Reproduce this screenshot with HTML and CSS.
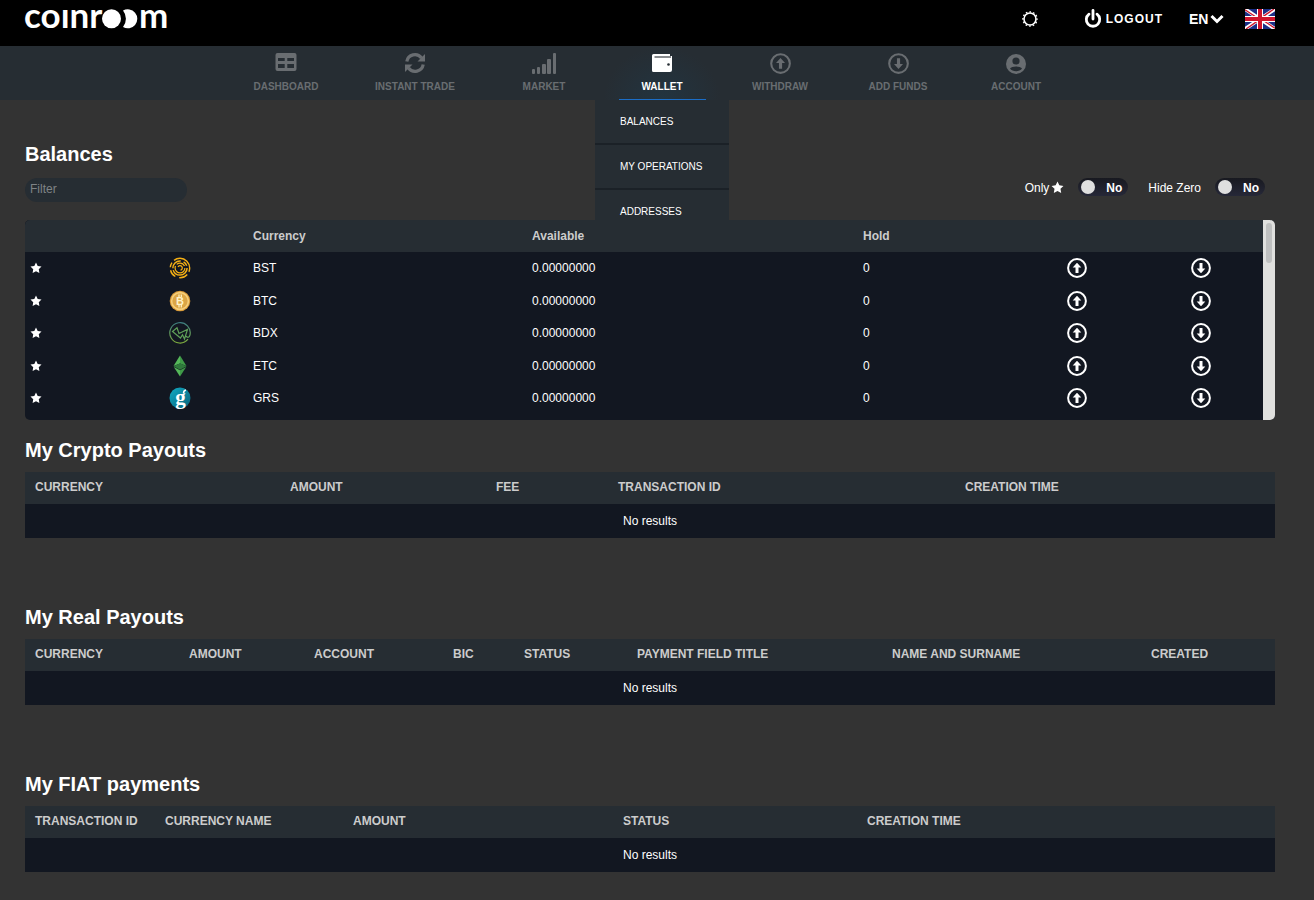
FILE: index.html
```html
<!DOCTYPE html>
<html lang="en">

<head>
  <meta charset="UTF-8">
  <meta name="viewport" content="width=device-width, initial-scale=1.0">
  <title>coinroom</title>
  <link rel="stylesheet" href="styles.css">
</head>

<body>
  <!-- shared icons -->
  <svg class="sprite" aria-hidden="true">
    <symbol id="star" viewBox="0 0 24 24">
      <path d="M12 1l3.4 7 7.6 1.1-5.500 5.400 1.300 7.600L12 18.500l-6.800 3.600 1.300-7.600L1 9.100 8.600 8z" fill="currentColor" />
    </symbol>
    <symbol id="up" viewBox="0 0 20 20">
      <circle cx="10" cy="10" r="8.900" fill="none" stroke="currentColor" stroke-width="2" />
      <path d="M10 4.700L14.300 9.500H11.500V15H8.500V9.500H5.700z" fill="currentColor" />
    </symbol>
    <symbol id="down" viewBox="0 0 20 20">
      <circle cx="10" cy="10" r="8.900" fill="none" stroke="currentColor" stroke-width="2" />
      <path d="M10 15.300L5.700 10.500H8.500V5H11.500V10.500H14.300z" fill="currentColor" />
    </symbol>
  </svg>

  <header class="header">
    <a class="logo" href="#" aria-label="coinroom">
      <svg width="146" height="22" viewBox="0 0 146 22">
        <text class="logo-text" x="-1" y="20">coınr</text>
        <circle cx="86.500" cy="10.800" r="9.500" fill="#fff" />
        <path d="M98 2.600A9.500 9.500 0 1 1 98 19A13 13 0 0 0 98 2.600z" fill="#fff" />
        <text class="logo-text" x="114" y="20">m</text>
      </svg>
    </a>
    <div class="header-right">
      <button class="theme" aria-label="Theme">
        <svg width="16" height="16" viewBox="0 0 16 16" fill="none" stroke="#fff">
          <circle cx="8" cy="8" r="6" stroke-width="1.600" />
          <circle cx="8" cy="8" r="7.100" stroke-width="1.400" stroke-dasharray="1.600 2.118" stroke-dashoffset=".8" />
        </svg>
      </button>
      <a class="logout" href="#">
        <svg width="18" height="20" viewBox="0 0 18 20" fill="none" stroke="#fff" stroke-width="2.800">
          <path d="M5 5.200a6.700 6.700 0 1 0 8 0" stroke-linecap="round" />
          <path d="M9 1.500v8.500" stroke-linecap="round" />
        </svg>
        <span>LOGOUT</span>
      </a>
      <div class="lang">
        <select aria-label="Language">
          <option>EN</option>
        </select>
        <svg width="14" height="10" viewBox="0 0 14 10"><path d="M1.500 2L7 7.500 12.500 2" fill="none" stroke="#fff" stroke-width="3" /></svg>
      </div>
      <svg class="flag" width="30" height="20" viewBox="0 0 30 20">
        <rect width="30" height="20" fill="#1c2f86" />
        <path d="M0 0L30 20M30 0L0 20" stroke="#fff" stroke-width="3.600" />
        <path d="M0 .7L14 10M30 19.300L16 10M29 0L15 9.600M1 20L15 10.400" stroke="#cf142b" stroke-width="1.300" />
        <path d="M15 0V20M0 10H30" stroke="#fff" stroke-width="6" />
        <path d="M15 0V20M0 10H30" stroke="#cf142b" stroke-width="4" />
      </svg>
    </div>
  </header>

  <nav class="nav">
    <div class="nav-item">
      <a href="#">
        <svg width="22" height="22" viewBox="0 0 22 22">
          <path fill="currentColor" fill-rule="evenodd" d="M2.500 1H19.500A2 2 0 0 1 21.500 3V17A2 2 0 0 1 19.500 19H2.500A2 2 0 0 1 .5 17V3A2 2 0 0 1 2.500 1zM3 6V9H9.700V6zM12.300 6V9H19V6zM3 12V16H9.700V12zM12.300 12V16H19V12z" />
        </svg>
        <span>DASHBOARD</span>
      </a>
    </div>
    <div class="nav-item nav-item-wide">
      <a href="#">
        <svg width="22" height="22" viewBox="0 0 22 22" fill="none" stroke="currentColor" stroke-width="3.200">
          <path d="M2.800 9.500A8.200 8.200 0 0 1 17.500 6" />
          <path d="M19.200 12.500A8.200 8.200 0 0 1 4.500 16" />
          <path d="M21 2V9.500H13.500z" fill="currentColor" stroke="none" />
          <path d="M1 20V12.500H8.500z" fill="currentColor" stroke="none" />
        </svg>
        <span>INSTANT TRADE</span>
      </a>
    </div>
    <div class="nav-item">
      <a href="#">
        <svg width="26" height="22" viewBox="0 0 26 22" fill="currentColor">
          <rect x="1" y="17" width="3" height="5" rx="1" />
          <rect x="6" y="15" width="3" height="7" rx="1" />
          <rect x="11" y="12" width="4" height="10" rx="1" />
          <rect x="16" y="7" width="4" height="15" rx="1" />
          <rect x="22" y="1" width="3" height="21" rx="1" />
        </svg>
        <span>MARKET</span>
      </a>
    </div>
    <div class="nav-item active">
      <a href="#">
        <svg width="22" height="22" viewBox="0 0 22 22">
          <path d="M2.500 2H19V4H21V18A2 2 0 0 1 19 20H2.500A1.500 1.500 0 0 1 1 18.500V3.500A1.500 1.500 0 0 1 2.500 2z" fill="#fff" />
          <path d="M3.500 5H20" stroke="#55595d" stroke-width="1.400" />
          <circle cx="17.500" cy="12.500" r="1.300" fill="#262d33" />
        </svg>
        <span>WALLET</span>
      </a>
      <ul class="menu">
        <li><a href="#">BALANCES</a></li>
        <li><a href="#">MY OPERATIONS</a></li>
        <li><a href="#">ADDRESSES</a></li>
      </ul>
    </div>
    <div class="nav-item">
      <a href="#">
        <svg width="22" height="22" viewBox="-1 -1 21 21"><use href="#up" width="20" height="20" /></svg>
        <span>WITHDRAW</span>
      </a>
    </div>
    <div class="nav-item">
      <a href="#">
        <svg width="22" height="22" viewBox="-1 -1 21 21"><use href="#down" width="20" height="20" /></svg>
        <span>ADD FUNDS</span>
      </a>
    </div>
    <div class="nav-item">
      <a href="#">
        <svg width="22" height="22" viewBox="0 0 22 22">
          <circle cx="11" cy="12" r="10" fill="currentColor" />
          <circle cx="11" cy="9" r="3.600" fill="#262d33" />
          <path d="M5 16.500C6.500 13.700 15.500 13.700 17 16.500C14.500 20 7.500 20 5 16.500z" fill="#262d33" />
        </svg>
        <span>ACCOUNT</span>
      </a>
    </div>
  </nav>

  <main class="main">
    <section>
      <h2>Balances</h2>
      <div class="toolbar">
        <input class="filter" type="text" placeholder="Filter" aria-label="Filter">
        <div class="switches">
          <label>
            <span class="switch-label">Only <svg width="13" height="13"><use href="#star" /></svg></span>
            <span class="switch"><input type="checkbox"><span class="knob"></span><b>No</b></span>
          </label>
          <label>
            <span class="switch-label">Hide Zero</span>
            <span class="switch"><input type="checkbox"><span class="knob"></span><b>No</b></span>
          </label>
        </div>
      </div>

      <div class="balances">
        <table class="balances-table">
          <colgroup>
            <col class="w139"><col class="w84"><col class="w279"><col class="w331"><col class="w204"><col class="w124"><col class="w77">
          </colgroup>
          <thead>
            <tr>
              <th></th>
              <th></th>
              <th>Currency</th>
              <th>Available</th>
              <th>Hold</th>
              <th></th>
              <th></th>
            </tr>
          </thead>
          <tbody>
            <tr>
              <td><button class="fav" aria-label="Favourite BST"><svg width="12" height="12"><use href="#star" /></svg></button></td>
              <td>
                <svg class="coin" width="22" height="22" viewBox="0 0 22 22" fill="none" stroke="#f5b014">
                  <circle cx="11" cy="11" r="9.700" stroke-width="1.400" stroke-dasharray="26 3 9 4 8 3 5 3" stroke-dashoffset="22" />
                  <circle cx="11" cy="11" r="7.100" stroke-width="1.500" stroke-dasharray="20 2 12 3 5 2.600" />
                  <circle cx="11" cy="11" r="4.900" stroke-width="1.200" stroke-dasharray="17 2 9 3" />
                  <path d="M9 9.800a2.300 2.300 0 1 1 2.500 3.400" stroke-width="1.300" />
                </svg>
              </td>
              <td>BST</td>
              <td>0.00000000</td>
              <td>0</td>
              <td><a href="#" aria-label="Withdraw BST"><svg width="20" height="20"><use href="#up" /></svg></a></td>
              <td><a href="#" aria-label="Add BST"><svg width="20" height="20"><use href="#down" /></svg></a></td>
            </tr>
            <tr>
              <td><button class="fav" aria-label="Favourite BTC"><svg width="12" height="12"><use href="#star" /></svg></button></td>
              <td>
                <svg class="coin" width="22" height="22" viewBox="0 0 22 22">
                  <circle cx="11" cy="11" r="10.300" fill="#d99a38" />
                  <circle cx="11" cy="11" r="9.200" fill="#f6cf7a" />
                  <circle cx="11" cy="11" r="7.600" fill="#dca646" />
                  <path d="M10 4.500V7M12.300 4.500V7M10 15V17.500M12.300 15V17.500" stroke="#fff3c8" stroke-width="1.200" />
                  <text class="coin-b" x="11" y="15">B</text>
                </svg>
              </td>
              <td>BTC</td>
              <td>0.00000000</td>
              <td>0</td>
              <td><a href="#" aria-label="Withdraw BTC"><svg width="20" height="20"><use href="#up" /></svg></a></td>
              <td><a href="#" aria-label="Add BTC"><svg width="20" height="20"><use href="#down" /></svg></a></td>
            </tr>
            <tr>
              <td><button class="fav" aria-label="Favourite BDX"><svg width="12" height="12"><use href="#star" /></svg></button></td>
              <td>
                <svg class="coin" width="22" height="22" viewBox="0 0 22 22" fill="none">
                  <defs>
                    <linearGradient id="bdx" x1="0" y1="0" x2="0" y2="1">
                      <stop offset="0" stop-color="#3d7d80" />
                      <stop offset="1" stop-color="#7fae3c" />
                    </linearGradient>
                  </defs>
                  <path d="M21 13A10.200 10.200 0 1 0 19 17.200" stroke="url(#bdx)" stroke-width="1.200" />
                  <path d="M3.500 9.500L8 5.800L10 11.500L18.500 7.500L15.500 17L13.500 12.800L11.500 16L3.500 9.500zM16.500 14Q20 17 21 13" stroke="#5f9f58" stroke-width="1.200" />
                </svg>
              </td>
              <td>BDX</td>
              <td>0.00000000</td>
              <td>0</td>
              <td><a href="#" aria-label="Withdraw BDX"><svg width="20" height="20"><use href="#up" /></svg></a></td>
              <td><a href="#" aria-label="Add BDX"><svg width="20" height="20"><use href="#down" /></svg></a></td>
            </tr>
            <tr>
              <td><button class="fav" aria-label="Favourite ETC"><svg width="12" height="12"><use href="#star" /></svg></button></td>
              <td>
                <svg class="coin" width="22" height="22" viewBox="0 0 22 22">
                  <path d="M11 .5L17.500 11L11 8.500z" fill="#3f9a48" />
                  <path d="M11 .5L4.500 11L11 8.500z" fill="#55b85a" />
                  <path d="M11 8.300L17.500 11.200L11 14.700L4.500 11.200z" fill="#2f7a3c" />
                  <path d="M4.800 12L11 15.200V21.500z" fill="#55b85a" />
                  <path d="M17.200 12L11 15.200V21.500z" fill="#3f9a48" />
                </svg>
              </td>
              <td>ETC</td>
              <td>0.00000000</td>
              <td>0</td>
              <td><a href="#" aria-label="Withdraw ETC"><svg width="20" height="20"><use href="#up" /></svg></a></td>
              <td><a href="#" aria-label="Add ETC"><svg width="20" height="20"><use href="#down" /></svg></a></td>
            </tr>
            <tr>
              <td><button class="fav" aria-label="Favourite GRS"><svg width="12" height="12"><use href="#star" /></svg></button></td>
              <td>
                <svg class="coin" width="22" height="22" viewBox="0 0 22 22">
                  <defs>
                    <linearGradient id="grs" x1="0" y1="0" x2="1" y2="1">
                      <stop offset="0" stop-color="#12abc4" />
                      <stop offset="1" stop-color="#066078" />
                    </linearGradient>
                  </defs>
                  <circle cx="11" cy="11" r="10.500" fill="url(#grs)" />
                  <path d="M14.500 6.500Q14.500 3.500 17 3" stroke="#fff" stroke-width="1.500" fill="none" />
                  <text class="coin-g" x="11.500" y="17">g</text>
                </svg>
              </td>
              <td>GRS</td>
              <td>0.00000000</td>
              <td>0</td>
              <td><a href="#" aria-label="Withdraw GRS"><svg width="20" height="20"><use href="#up" /></svg></a></td>
              <td><a href="#" aria-label="Add GRS"><svg width="20" height="20"><use href="#down" /></svg></a></td>
            </tr>
          </tbody>
        </table>
        <div class="scrollbar"><div class="thumb"></div></div>
      </div>
    </section>

    <section class="payouts">
      <h2>My Crypto Payouts</h2>
      <table>
        <colgroup>
          <col class="w255"><col class="w206"><col class="w122"><col class="w347"><col class="w320">
        </colgroup>
        <thead>
          <tr>
            <th>CURRENCY</th>
            <th>AMOUNT</th>
            <th>FEE</th>
            <th>TRANSACTION ID</th>
            <th>CREATION TIME</th>
          </tr>
        </thead>
        <tbody>
          <tr><td class="empty" colspan="5">No results</td></tr>
        </tbody>
      </table>
    </section>

    <section class="payouts">
      <h2>My Real Payouts</h2>
      <table>
        <colgroup>
          <col class="w154"><col class="w125"><col class="w139"><col class="w71"><col class="w113"><col class="w255"><col class="w259"><col class="w134">
        </colgroup>
        <thead>
          <tr>
            <th>CURRENCY</th>
            <th>AMOUNT</th>
            <th>ACCOUNT</th>
            <th>BIC</th>
            <th>STATUS</th>
            <th>PAYMENT FIELD TITLE</th>
            <th>NAME AND SURNAME</th>
            <th>CREATED</th>
          </tr>
        </thead>
        <tbody>
          <tr><td class="empty" colspan="8">No results</td></tr>
        </tbody>
      </table>
    </section>

    <section class="payouts">
      <h2>My FIAT payments</h2>
      <table>
        <colgroup>
          <col class="w130"><col class="w188"><col class="w270"><col class="w244"><col class="w418">
        </colgroup>
        <thead>
          <tr>
            <th>TRANSACTION ID</th>
            <th>CURRENCY NAME</th>
            <th>AMOUNT</th>
            <th>STATUS</th>
            <th>CREATION TIME</th>
          </tr>
        </thead>
        <tbody>
          <tr><td class="empty" colspan="5">No results</td></tr>
        </tbody>
      </table>
    </section>
  </main>
</body>

</html>
```

FILE: styles.css
```css
* {
  box-sizing: border-box;
}

body {
  margin: 0;
  padding: 0;
  color: #fff;
  background: #333;
  font-family: "Liberation Sans", Arial, sans-serif;
  font-size: 12px;
  line-height: 14px;
}

a {
  color: inherit;
  text-decoration: none;
}

button {
  padding: 0;
  border: 0;
  background: none;
  color: inherit;
  cursor: pointer;
}

svg {
  display: block;
}

.sprite {
  position: absolute;
  width: 0;
  height: 0;
}

/* header */
.header {
  display: flex;
  justify-content: space-between;
  align-items: center;
  height: 46px;
  padding: 0 39px 8px 25px;
  background: #000;
}

.logo svg {
  overflow: visible;
}

.logo-text {
  fill: #fff;
  font-family: Lato, sans-serif;
  font-size: 35px;
  font-weight: 700;
}

.header-right {
  display: flex;
  align-items: center;
}

.theme {
  margin-right: 46px;
}

.logout {
  display: flex;
  align-items: center;
  gap: 4px;
  margin-right: 26px;
  font-weight: 700;
  letter-spacing: 1px;
}

.lang {
  display: flex;
  align-items: center;
  margin-right: 21px;
}

.lang select {
  appearance: none;
  width: 21px;
  padding: 0;
  border: 0;
  background: none;
  color: #fff;
  font: 700 14px "Liberation Sans", Arial, sans-serif;
}

/* navigation */
.nav {
  display: flex;
  justify-content: center;
  height: 54px;
  padding-right: 12px;
  background: #262d33;
}

.nav-item {
  position: relative;
  display: flex;
  justify-content: center;
  width: 118px;
  color: #696d71;
  font-size: 10px;
  font-weight: 700;
  line-height: 12px;
}

.nav-item-wide {
  width: 140px;
}

.nav-item > a {
  display: flex;
  flex-direction: column;
  align-items: center;
  gap: 7px;
  padding-top: 6px;
}

.nav-item.active {
  color: #fff;
  background: radial-gradient(ellipse at 50% 100%, #223440 0%, #262d33 70%);
}

.nav-item.active > a {
  width: 87px;
  border-bottom: 1px solid #1b6ec8;
}

.menu {
  position: absolute;
  top: 100%;
  left: 50%;
  width: 134px;
  margin: 0 0 0 -67px;
  padding: 0;
  list-style: none;
  background: #262d33;
  font-weight: 400;
}

.menu li {
  height: 45px;
  padding: 16px 0 0 25px;
  border-bottom: 2px solid #1b2127;
}

/* content */
.main {
  padding: 42px 39px 28px 25px;
}

h2 {
  margin: 0;
  font-size: 20px;
  line-height: 24px;
}

.toolbar {
  display: flex;
  justify-content: space-between;
  align-items: flex-start;
  margin: 12px 0 18px;
}

.filter {
  width: 162px;
  height: 24px;
  padding: 0 5px 2px;
  border: 0;
  border-radius: 12px;
  background: #262d33;
  color: #fff;
  font: inherit;
}

.filter::placeholder {
  color: #7f8386;
}

.switches {
  display: flex;
  gap: 20px;
  padding-right: 10px;
}

.switches label {
  display: flex;
  align-items: center;
  gap: 14px;
  height: 18px;
}

.switch-label {
  display: flex;
  gap: 2px;
  padding-top: 2px;
}

.switch {
  position: relative;
  display: flex;
  align-items: center;
  justify-content: space-between;
  width: 50px;
  height: 18px;
  padding: 0 6px 0 3px;
  border-radius: 9px;
  background: linear-gradient(#181920, #262838);
}

.switch input {
  position: absolute;
  inset: 0;
  width: 100%;
  height: 100%;
  margin: 0;
  opacity: 0;
  cursor: pointer;
}

.knob {
  width: 14px;
  height: 14px;
  border-radius: 50%;
  background: #dfdfdf;
}

.switch b {
  padding-top: 2px;
}

/* tables */
table {
  width: 100%;
  border-collapse: collapse;
  table-layout: fixed;
  background: #121721;
}

thead {
  background: #262d33;
}

th,
td {
  padding: 0 10px;
  text-align: left;
  white-space: nowrap;
}

th {
  height: 32px;
  padding-bottom: 2px;
  color: #ccc;
}

td {
  height: 34px;
}

.empty {
  text-align: center;
}

.payouts {
  margin-bottom: 67px;
}

.payouts:last-child {
  margin-bottom: 0;
}

.payouts table {
  margin-top: 10px;
}

/* balances list, sits over the open menu */
.balances {
  position: relative;
  display: flex;
  height: 200px;
  margin-bottom: 18px;
  border-radius: 5px;
  overflow: hidden;
  background: #121721;
}

.balances-table {
  flex: 1;
  align-self: flex-start;
}

.balances-table th,
.balances-table td {
  padding: 0 5px;
}

.balances-table td {
  height: 32px;
}

.balances-table tr:nth-child(even) td {
  height: 33px;
}

.fav {
  display: block;
}

.coin-b,
.coin-g {
  fill: #fff3c8;
  font-family: "Liberation Sans", Arial, sans-serif;
  font-size: 11px;
  font-weight: 700;
  text-anchor: middle;
}

.coin-g {
  fill: #fff;
  font-family: "Liberation Serif", serif;
  font-size: 21px;
}

.scrollbar {
  flex: none;
  width: 12px;
  padding: 3px;
  background: #e0e0de;
}

.thumb {
  height: 40px;
  border-radius: 3px;
  background: #bfc0c0;
}

/* column widths */
.w71 { width: 71px; }
.w77 { width: 77px; }
.w84 { width: 84px; }
.w113 { width: 113px; }
.w122 { width: 122px; }
.w124 { width: 124px; }
.w125 { width: 125px; }
.w130 { width: 130px; }
.w134 { width: 134px; }
.w139 { width: 139px; }
.w154 { width: 154px; }
.w188 { width: 188px; }
.w204 { width: 204px; }
.w206 { width: 206px; }
.w244 { width: 244px; }
.w255 { width: 255px; }
.w259 { width: 259px; }
.w270 { width: 270px; }
.w279 { width: 279px; }
.w320 { width: 320px; }
.w331 { width: 331px; }
.w347 { width: 347px; }
.w418 { width: 418px; }
```
